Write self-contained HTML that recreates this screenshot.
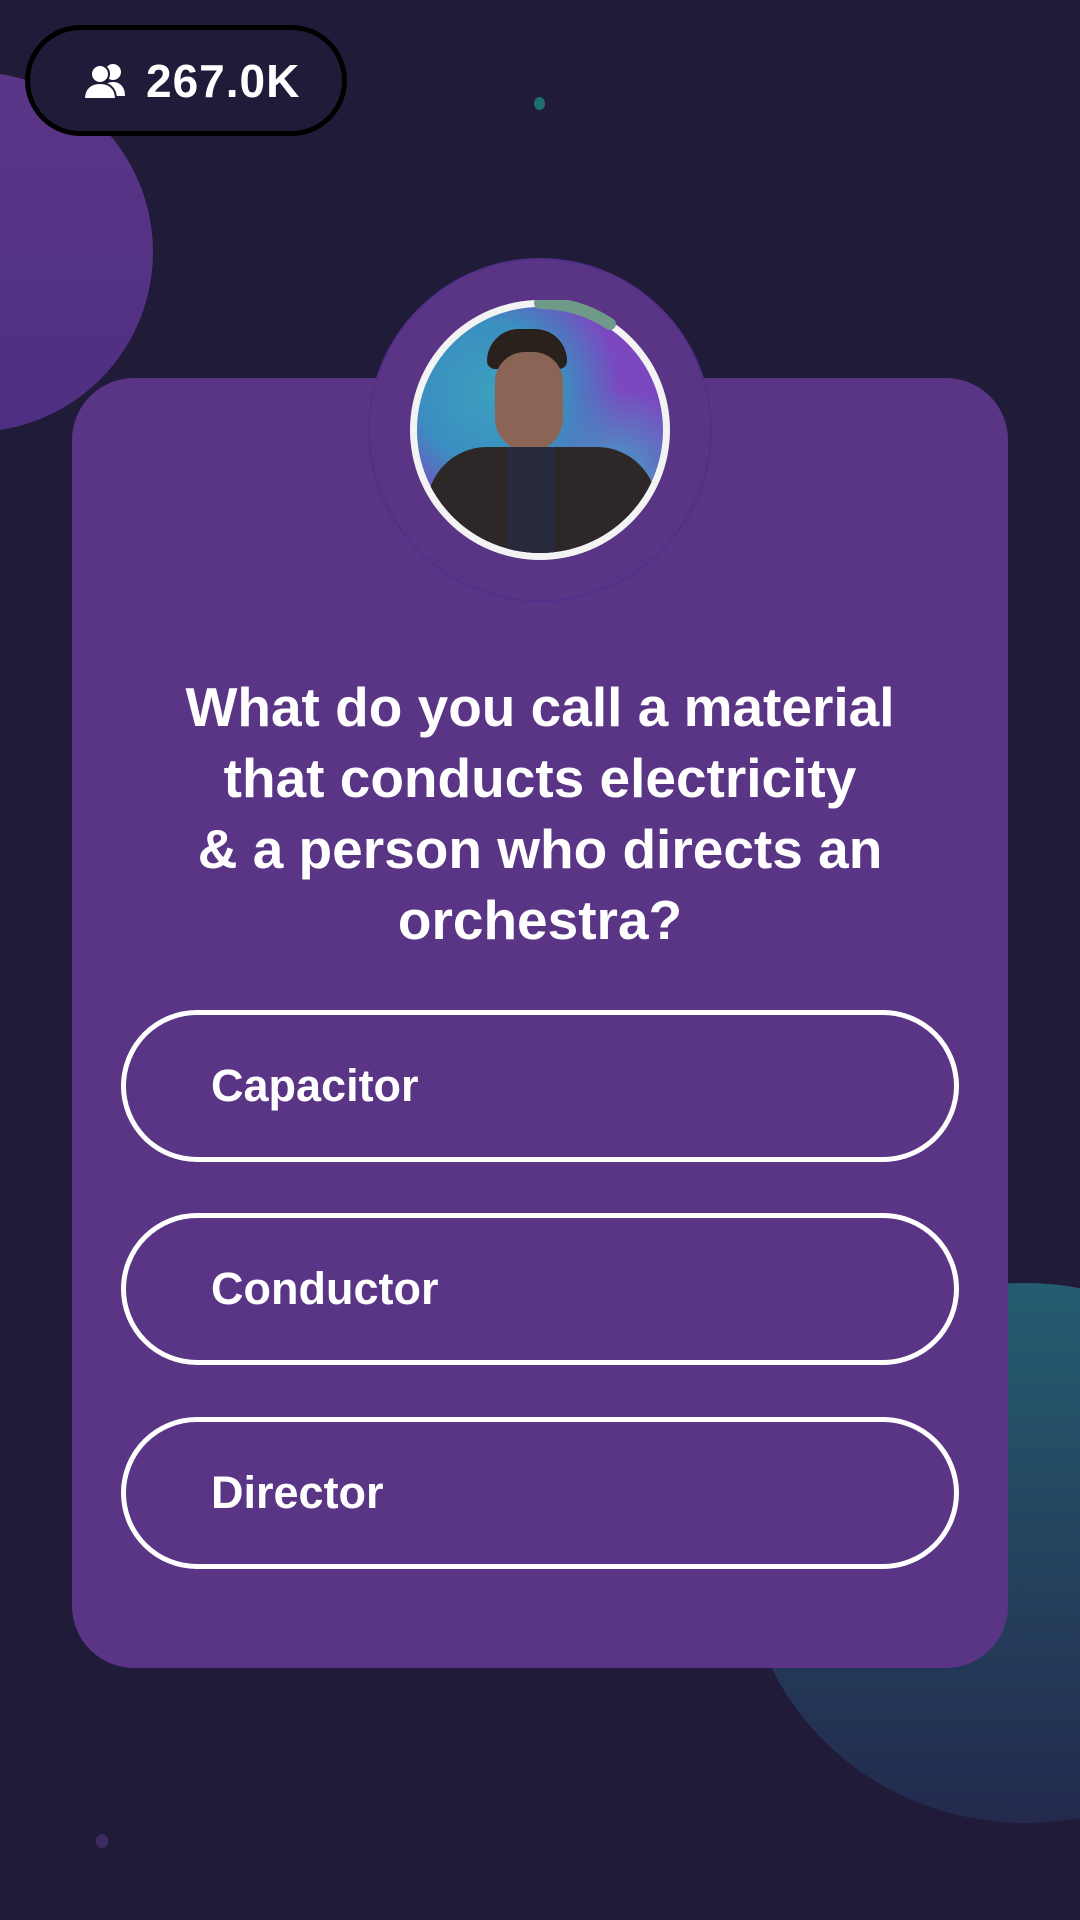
<!DOCTYPE html>
<html><head><meta charset="utf-8"><style>
*{margin:0;padding:0;box-sizing:border-box}
body{width:1080px;height:1920px;background:#1f1b39;position:relative;overflow:hidden;font-family:"Liberation Sans",sans-serif;color:#fff}
.c{position:absolute;border-radius:50%}
.pill{position:absolute;left:25px;top:25px;width:322px;height:111px;border:5px solid #000;border-radius:56px;background:#1f1b39;display:flex;align-items:center;padding-left:52px}
.pill span{font-weight:bold;font-size:46px;margin-left:16px;letter-spacing:1px}
.card{position:absolute;left:72px;top:378px;width:936px;height:1290px;background:#5a3585;border-radius:62px}
.q{position:absolute;left:72px;top:672px;width:936px;text-align:center;font-weight:bold;font-size:55px;line-height:71px}
.opt{position:absolute;left:121px;width:838px;height:152px;border:5px solid #fff;border-radius:76px;font-weight:bold;font-size:45px;line-height:142px;padding-left:85px}
</style></head><body>
<div class="c" style="left:-207px;top:72px;width:360px;height:360px;background:linear-gradient(180deg,#5b3587,#4e2f82)"></div>
<div class="c" style="left:745px;top:1283px;width:560px;height:540px;background:linear-gradient(180deg,#245c70,#232a4e)"></div>
<div class="c" style="left:534px;top:97px;width:11px;height:13px;background:#1f6e6a"></div>
<div class="c" style="left:96px;top:1834px;width:12px;height:14px;background:#3e2b62"></div>
<div class="pill"><svg width="48" height="38" viewBox="0 0 48 38"><g fill="#fff"><circle cx="31" cy="10" r="8"/><path d="M19 34c0-10 6-14 12-14s12 4 12 14z" /><circle cx="18" cy="12" r="9" stroke="#1f1b39" stroke-width="2"/><path d="M2 37c0-11 7-16 16-16s16 5 16 16z" stroke="#1f1b39" stroke-width="2"/></g></svg><span>267.0K</span></div>
<div class="card"></div>
<div class="c" style="left:368px;top:258px;width:344px;height:344px;background:#5a3585;border:2px solid #52308a"></div>
<div class="c" style="left:410px;top:300px;width:260px;height:260px;background:#f3f3f3"></div>
<div class="c" style="left:417px;top:307px;width:246px;height:246px;overflow:hidden;background:radial-gradient(circle at 30% 35%,#3d9fbf 0,#3a8fc0 30%,transparent 55%),radial-gradient(circle at 80% 70%,#3fa4c2 0,transparent 35%),#7b48c0">
 <div style="position:absolute;left:70px;top:22px;width:80px;height:40px;background:#2a201c;border-radius:40px 40px 10px 10px"></div>
 <div style="position:absolute;left:78px;top:45px;width:68px;height:100px;background:#8a6555;border-radius:30px 30px 34px 34px"></div>
 <div style="position:absolute;left:10px;top:140px;width:230px;height:140px;background:#2d2727;border-radius:60px 60px 0 0"></div>
 <div style="position:absolute;left:90px;top:140px;width:48px;height:120px;background:#262a3a"></div>
</div>
<svg style="position:absolute;left:410px;top:300px" width="260" height="260"><path d="M130 3 A127 127 0 0 1 200 24" stroke="#6f9a8a" stroke-width="12" fill="none" stroke-linecap="round"/></svg>
<div class="q">What do you call a material<br>that conducts electricity<br>&amp; a person who directs an<br>orchestra?</div>
<div class="opt" style="top:1010px">Capacitor</div>
<div class="opt" style="top:1213px">Conductor</div>
<div class="opt" style="top:1417px">Director</div>
</body></html>
